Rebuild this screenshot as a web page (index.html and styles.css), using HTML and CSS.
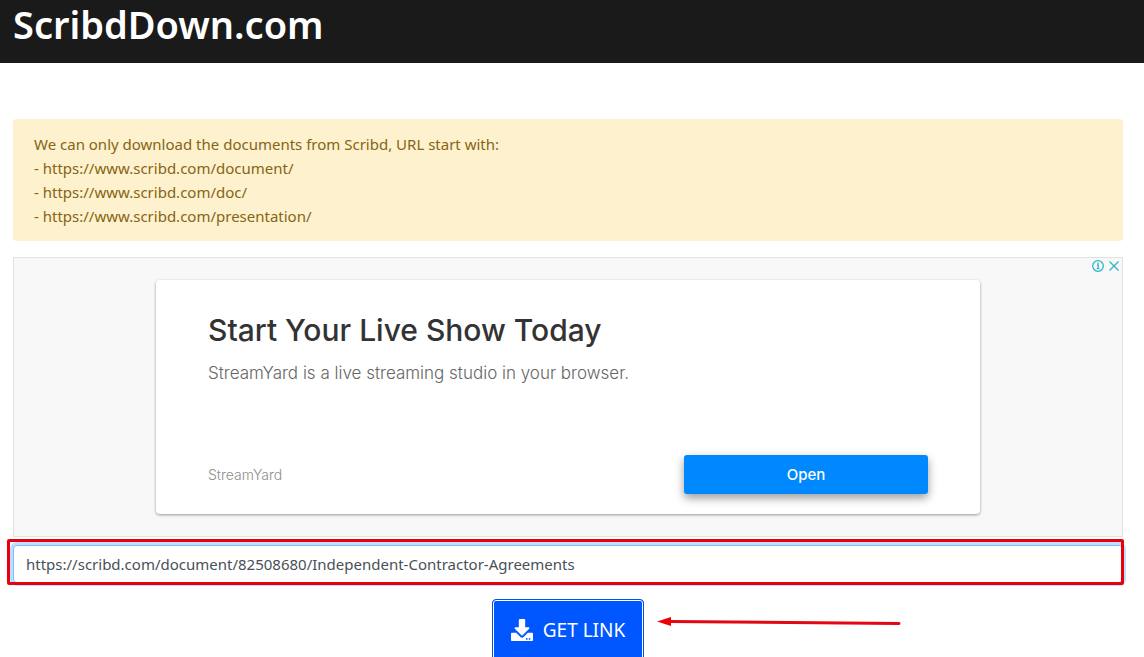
FILE: index.html
```html
<!DOCTYPE html>
<html lang="en">

<head>
    <meta charset="UTF-8">
    <meta name="viewport" content="width=device-width, initial-scale=1.0">
    <title>ScribdDown.com</title>
    <link rel="stylesheet" href="styles.css">
</head>

<body>
    <header class="header">
        <h1>ScribdDown.com</h1>
    </header>

    <main class="container">
        <div class="alert">
            We can only download the documents from Scribd, URL start with:<br>
            - https://www.scribd.com/document/<br>
            - https://www.scribd.com/doc/<br>
            - https://www.scribd.com/presentation/
        </div>

        <section class="ad">
            <div class="adChoices">
                <button type="button" aria-label="Ad info">
                    <svg width="12" height="12" viewBox="0 0 12 12">
                        <circle cx="6" cy="6" r="5.3" />
                        <path d="M5 5h1.2v3.6M4.8 8.7h2.6M6 2.6v1.3" />
                    </svg>
                </button>
                <button type="button" aria-label="Close ad">
                    <svg width="12" height="12" viewBox="0 0 12 12">
                        <path d="M1.5 1.5l9 9M10.5 1.5l-9 9" />
                    </svg>
                </button>
            </div>
            <div class="adCard">
                <h2>Start Your Live Show Today</h2>
                <p>StreamYard is a live streaming studio in your browser.</p>
                <div class="adFooter">
                    <span>StreamYard</span>
                    <button type="button" class="openButton">Open</button>
                </div>
            </div>
        </section>

        <form class="linkForm">
            <div class="field">
                <input type="text" aria-label="Document URL" value="https://scribd.com/document/82508680/Independent-Contractor-Agreements">
                <span class="marker"></span>
            </div>
            <div class="action">
                <button type="button" class="getButton">
                    <svg width="22" height="22" viewBox="0 0 512 512">
                        <path d="M206 0h100c13 0 24 11 24 24v168h78c18 0 27 21 14 34L270 378c-8 7-20 7-28 0L90 226c-13-13-4-34 14-34h78V24c0-13 11-24 24-24zm306 346v142c0 13-11 24-24 24H24c-13 0-24-11-24-24V346c0-13 11-24 24-24h97l99 99c20 20 52 20 72 0l99-99h97c13 0 24 11 24 24zM388 464a20 20 0 1 0-40 0 20 20 0 0 0 40 0zm64 0a20 20 0 1 0-40 0 20 20 0 0 0 40 0z" />
                    </svg>
                    GET LINK
                </button>
                <svg class="arrow" width="244" height="12" viewBox="0 0 244 12">
                    <path class="shaft" d="M12 4.5L242 6.5" />
                    <path class="head" d="M0 4.5L14 0v9z" />
                </svg>
            </div>
        </form>
    </main>
</body>

</html>
```
FILE: styles.css
```css
* {
    margin: 0;
    padding: 0;
    box-sizing: border-box;
}

body {
    height: 100vh;
    overflow: hidden;
    font-family: "Segoe UI", "Noto Sans", sans-serif;
    font-size: 15px;
    line-height: 24px;
    background-color: #fff;
}

button,
input {
    font: inherit;
}

.header {
    height: 63px;
    padding: 0 13px;
    background-color: #1a1a1a;
    color: #fff;
}

.header h1 {
    font-size: 38px;
    font-weight: 600;
    line-height: 49px;
}

.container {
    padding: 56px 21px 0 13px;
}

.alert {
    margin-bottom: 16px;
    padding: 13px 21px;
    border-radius: 4px;
    background-color: #fef1cd;
    color: #856516;
}

.ad {
    position: relative;
    height: 280px;
    padding-top: 22px;
    border: 1px solid #e2e2e2;
    background-color: #f8f8f8;
    font-family: "Google Sans", Inter, sans-serif;
}

.adChoices {
    position: absolute;
    top: 2px;
    right: 2px;
    display: flex;
    gap: 4px;
}

.adChoices button {
    display: flex;
    border: none;
    background-color: transparent;
    cursor: pointer;
}

.adChoices svg {
    fill: none;
    stroke: #2cb5cb;
    stroke-width: 1.3;
}

.adCard {
    max-width: 824px;
    height: 234px;
    margin: 0 auto;
    padding: 28px 52px 20px;
    display: flex;
    flex-direction: column;
    border-radius: 4px;
    background-color: #fff;
    box-shadow: 0 1px 3px rgba(0, 0, 0, 0.4);
}

.adCard h2 {
    font-size: 30px;
    font-weight: 500;
    line-height: 44px;
    color: #333;
}

.adCard p {
    margin-top: 9px;
    font-size: 17px;
    font-weight: 300;
    color: #666;
}

.adFooter {
    margin-top: auto;
    display: flex;
    align-items: center;
    justify-content: space-between;
    font-size: 14px;
    font-weight: 300;
    color: #8e8e8e;
}

.openButton {
    width: 244px;
    height: 39px;
    border: none;
    border-radius: 3px;
    background-color: #0088ff;
    color: #fff;
    font-size: 15px;
    font-weight: 500;
    box-shadow: 0 4px 10px rgba(0, 0, 0, 0.4);
    cursor: pointer;
}

.field {
    position: relative;
    margin-top: 8px;
}

.field input {
    display: block;
    width: 100%;
    height: 38px;
    padding: 6px 12px;
    border: 1px solid #80bdff;
    border-radius: 4px;
    outline: none;
    color: #495057;
    box-shadow: 0 0 0 3px #bfdeff;
}

/* red frame round the url box */
.marker {
    position: absolute;
    inset: -6px -1px -2px -6px;
    border: 3px solid #e8000d;
    border-radius: 2px;
    pointer-events: none;
}

.action {
    position: relative;
    width: max-content;
    margin: 16px auto 0;
}

.getButton {
    display: flex;
    align-items: center;
    gap: 10px;
    height: 62px;
    padding: 0 18px;
    border: 1px solid #0056d6;
    border-radius: 4px;
    background-color: #0057ff;
    box-shadow: inset 0 0 0 1px #fff;
    color: #fff;
    font-size: 19px;
    cursor: pointer;
}

.getButton svg {
    fill: #fff;
}

.arrow {
    position: absolute;
    top: 18px;
    left: calc(100% + 13px);
}

.shaft {
    fill: none;
    stroke: #e30613;
    stroke-width: 3;
    stroke-linecap: round;
}

.head {
    fill: #f00000;
}
```
